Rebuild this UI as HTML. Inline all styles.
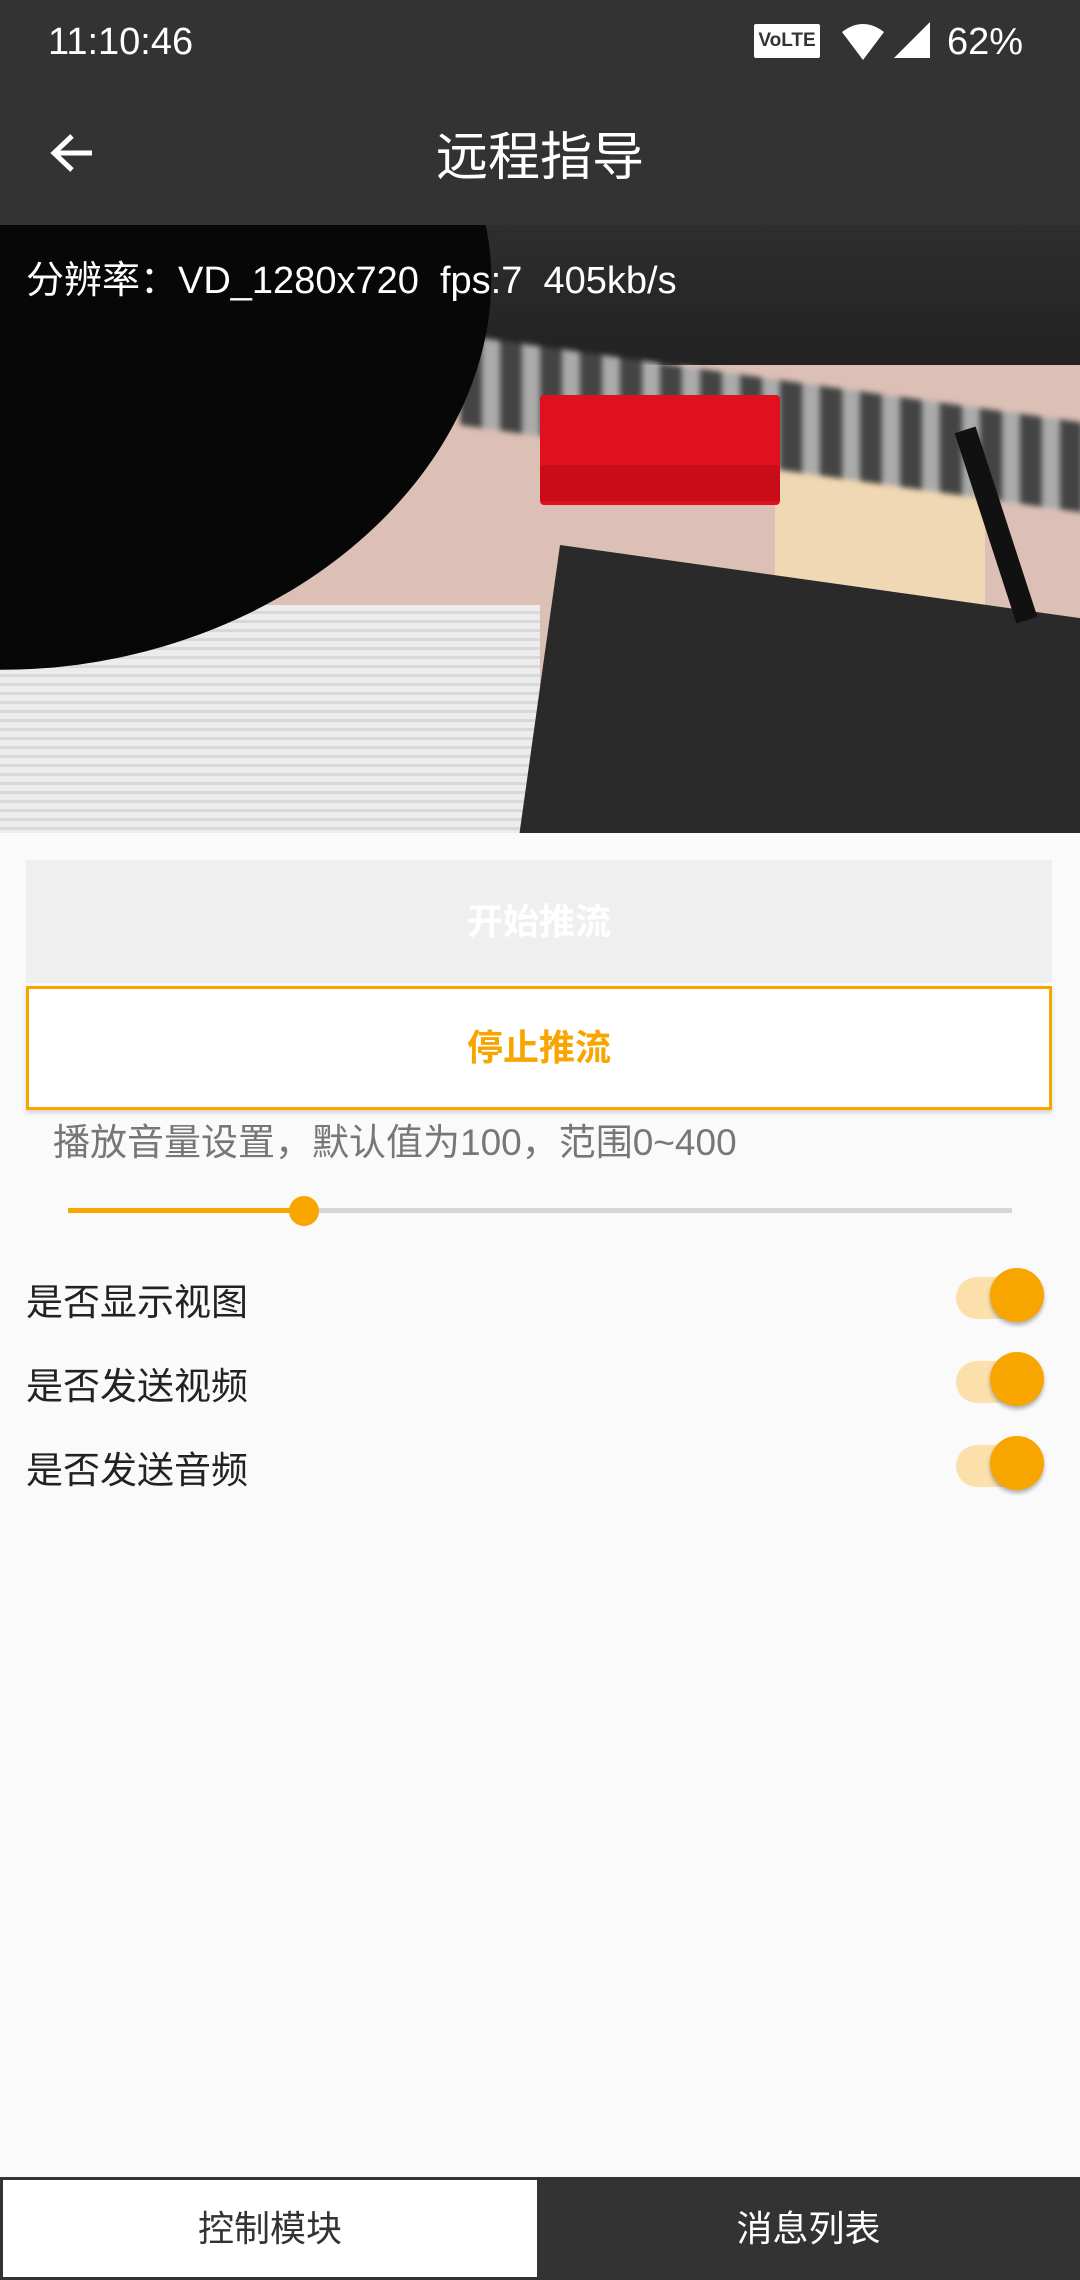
<!DOCTYPE html>
<html><head><meta charset="utf-8"><style>
*{margin:0;padding:0;box-sizing:border-box}
body{width:1080px;height:2280px;background:#fafafa;font-family:"Liberation Sans","Noto Sans CJK SC",sans-serif;position:relative;overflow:hidden}
.abs{position:absolute}
.top{left:0;top:0;width:1080px;height:225px;background:#333}
.video{left:0;top:225px;width:1080px;height:608px;overflow:hidden;background:#dcc0b6}
.sw{position:absolute;right:36px;width:88px;height:60px}
.sw .tr{position:absolute;left:0;top:9px;width:70px;height:42px;border-radius:21px;background:#fbe0ac}
.sw .th{position:absolute;right:0;top:0;width:54px;height:54px;border-radius:50%;background:#f8a500;box-shadow:0 3px 4px rgba(0,0,0,.3)}
.lbl{position:absolute;left:26px;font-size:37px;color:#222}
</style></head><body>
<div class="abs top"></div>
<div class="abs" style="left:48px;top:21px;font-size:38px;color:#fff">11:10:46</div>
<div class="abs" style="left:754px;top:24px;width:66px;height:34px;background:#fff;color:#333;font-size:19px;font-weight:bold;text-align:center;line-height:34px;border-radius:2px">VoLTE</div>
<svg class="abs" style="left:838px;top:22px" width="50" height="40" viewBox="0 0 50 40"><path d="M4 10 Q25 -6 46 10 L25 38 Z" fill="#fff"/></svg>
<svg class="abs" style="left:894px;top:22px" width="36" height="36" viewBox="0 0 36 36"><path d="M36 0 L36 36 L0 36 Z" fill="#fff"/></svg>
<div class="abs" style="left:947px;top:21px;font-size:38px;color:#fff">62%</div>
<svg class="abs" style="left:50px;top:133px" width="46" height="40" viewBox="0 0 46 40"><path d="M4 20 H42 M22 3 L4 20 L22 37" stroke="#fff" stroke-width="5" fill="none"/></svg>
<div class="abs" style="left:0;width:1080px;top:115px;text-align:center;font-size:52px;color:#fff">远程指导</div>

<div class="abs video">
 <div class="abs" style="left:775px;top:190px;width:210px;height:290px;background:#f1d8b4"></div>
 <div class="abs" style="left:0;top:0;width:1080px;height:140px;background:linear-gradient(#2e2e2e,#222)"></div>
 <div class="abs" style="left:460px;top:110px;width:640px;height:90px;background:repeating-linear-gradient(90deg,#444 0 22px,#aaa 22px 40px);transform:skewY(8deg);transform-origin:left top;filter:blur(3px)"></div>
 <div class="abs" style="left:0;top:380px;width:540px;height:228px;background:repeating-linear-gradient(#ececec 0 6px,#d8d8d8 6px 9px)"></div>
 <div class="abs" style="left:-400px;top:-260px;width:895px;height:700px;border-radius:0 0 50% 50%;background:#070707;transform:rotate(-12deg)"></div>
 <div class="abs" style="left:540px;top:170px;width:240px;height:110px;background:#e0101e;border-radius:4px"></div>
 <div class="abs" style="left:540px;top:240px;width:240px;height:36px;background:#c80c18;border-radius:4px"></div>
 <div class="abs" style="left:560px;top:320px;width:600px;height:340px;background:#2a2a2a;transform:rotate(8deg);transform-origin:left top"></div>
 <div class="abs" style="left:985px;top:200px;width:22px;height:200px;background:#111;transform:rotate(-18deg)"></div>
 <div class="abs" style="left:26px;top:24px;font-size:38px;color:#fff">分辨率：VD_1280x720&nbsp;&nbsp;fps:7&nbsp;&nbsp;405kb/s</div>
</div>

<div class="abs" style="left:26px;top:860px;width:1026px;height:123px;background:#efefef;color:#fff;font-size:36px;font-weight:bold;text-align:center;line-height:123px">开始推流</div>
<div class="abs" style="left:26px;top:986px;width:1026px;height:124px;background:#fff;border:3px solid #f8a500;color:#f8a500;font-size:36px;font-weight:bold;text-align:center;line-height:118px;box-shadow:0 3px 4px rgba(0,0,0,.15)">停止推流</div>
<div class="abs" style="left:53px;top:1112px;font-size:37px;color:#777">播放音量设置，默认值为100，范围0~400</div>
<div class="abs" style="left:68px;top:1208px;width:944px;height:5px;background:#d6d6d6"></div>
<div class="abs" style="left:68px;top:1208px;width:236px;height:5px;background:#f8a500"></div>
<div class="abs" style="left:289px;top:1196px;width:30px;height:30px;border-radius:50%;background:#f8a500"></div>

<div class="lbl" style="top:1272px">是否显示视图</div>
<div class="sw" style="top:1268px"><div class="tr"></div><div class="th"></div></div>
<div class="lbl" style="top:1356px">是否发送视频</div>
<div class="sw" style="top:1352px"><div class="tr"></div><div class="th"></div></div>
<div class="lbl" style="top:1440px">是否发送音频</div>
<div class="sw" style="top:1436px"><div class="tr"></div><div class="th"></div></div>

<div class="abs" style="left:0;top:2177px;width:1080px;height:103px;background:#333"></div>
<div class="abs" style="left:3px;top:2180px;width:534px;height:97px;background:#fff;color:#333;font-size:36px;text-align:center;line-height:97px">控制模块</div>
<div class="abs" style="left:537px;top:2180px;width:543px;height:97px;color:#fff;font-size:36px;text-align:center;line-height:97px">消息列表</div>
</body></html>
